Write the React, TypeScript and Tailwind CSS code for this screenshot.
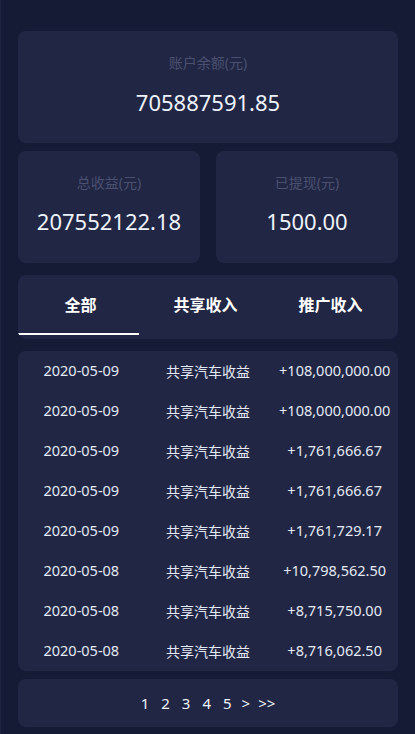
import { useState } from "react";

const rows = [
  { date: "2020-05-09", name: "共享汽车收益", amount: "+108,000,000.00" },
  { date: "2020-05-09", name: "共享汽车收益", amount: "+108,000,000.00" },
  { date: "2020-05-09", name: "共享汽车收益", amount: "+1,761,666.67" },
  { date: "2020-05-09", name: "共享汽车收益", amount: "+1,761,666.67" },
  { date: "2020-05-09", name: "共享汽车收益", amount: "+1,761,729.17" },
  { date: "2020-05-08", name: "共享汽车收益", amount: "+10,798,562.50" },
  { date: "2020-05-08", name: "共享汽车收益", amount: "+8,715,750.00" },
  { date: "2020-05-08", name: "共享汽车收益", amount: "+8,716,062.50" },
];

const tabs = ["全部", "共享收入", "推广收入"];

export default function App() {
  const [tab, setTab] = useState(0);

  return (
    <div
      className="min-h-screen bg-[#151a35] border-l border-[#1d2240] pl-[17px] pr-[17px] pt-[31px] pb-[7px]"
      style={{ fontFamily: '"Noto Sans", "Noto Sans CJK SC", sans-serif' }}
    >
      {/* Balance */}
      <div className="h-[112px] rounded-lg bg-[#212644] flex flex-col items-center">
        <div className="mt-[22px] text-[14px] leading-[20px] text-[#4a5070]">账户余额(元)</div>
        <div className="mt-[13px] text-[22px] leading-[32px] text-[#eef3fb]">705887591.85</div>
      </div>

      {/* Income / withdrawn */}
      <div className="mt-2 grid grid-cols-2 gap-4">
        <div className="h-[112px] rounded-lg bg-[#212644] flex flex-col items-center">
          <div className="mt-[22px] text-[14px] leading-[20px] text-[#4a5070]">总收益(元)</div>
          <div className="mt-[12px] text-[22px] leading-[32px] text-[#eef3fb]">207552122.18</div>
        </div>
        <div className="h-[112px] rounded-lg bg-[#212644] flex flex-col items-center">
          <div className="mt-[22px] text-[14px] leading-[20px] text-[#4a5070]">已提现(元)</div>
          <div className="mt-[12px] text-[22px] leading-[32px] text-[#eef3fb]">1500.00</div>
        </div>
      </div>

      {/* Tabs */}
      <div className="mt-3 h-[64px] rounded-lg bg-[#212644] flex overflow-hidden">
        {tabs.map((t, i) => (
          <button
            key={t}
            onClick={() => setTab(i)}
            className="w-[125px] flex flex-col items-center"
          >
            <span className="mt-[19px] text-[16px] leading-[22px] font-bold text-white">{t}</span>
            <span
              className={`mt-[17px] h-[2px] w-[121px] self-start ${
                tab === i ? "bg-white" : "bg-transparent"
              }`}
            />
          </button>
        ))}
      </div>

      {/* Records */}
      <div className="mt-3 rounded-lg bg-[#212644]">
        {rows.map((r, i) => (
          <div key={i} className="grid grid-cols-3 h-10 items-center text-[14.5px] text-[#e4eaf5]">
            <span className="text-center">{r.date}</span>
            <span className="text-center text-[14px]">{r.name}</span>
            <span className="text-center">{r.amount}</span>
          </div>
        ))}
      </div>

      {/* Pagination */}
      <div className="mt-2 h-12 rounded-lg bg-[#212644] flex items-center justify-center text-[15px] text-[#eef3fb]">
        <div className="flex items-center gap-[12px]">
          <span>1</span>
          <span>2</span>
          <span>3</span>
          <span>4</span>
          <span>5</span>
        </div>
        <span className="ml-[10px]">&gt;</span>
        <span className="ml-[8px]">&gt;&gt;</span>
      </div>
    </div>
  );
}
